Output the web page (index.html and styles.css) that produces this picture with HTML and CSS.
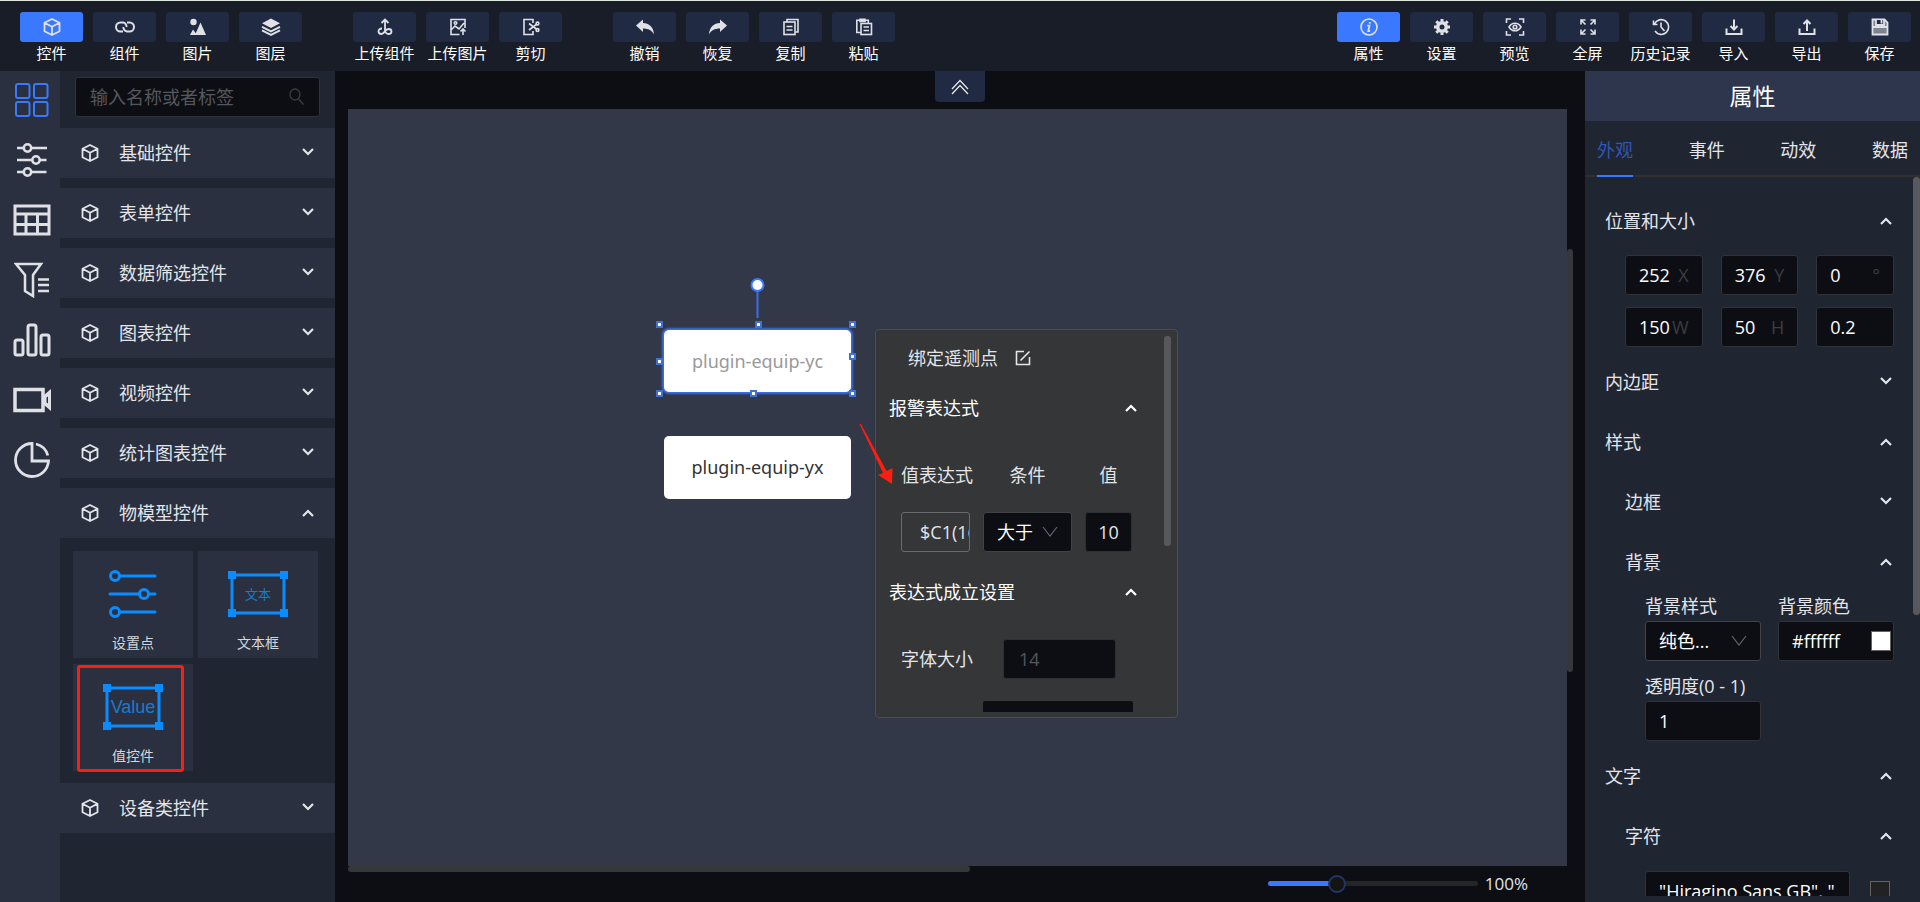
FILE: index.html
```html
<!DOCTYPE html>
<html lang="zh-CN">
<head>
  <meta charset="UTF-8" />
  <meta name="viewport" content="width=device-width, initial-scale=1.0"/>
  <title>组态编辑器</title>
  <link rel="stylesheet" href="styles.css">
</head>
<body>
  <!-- shared icons -->
  <svg class="sprite" aria-hidden="true">
    <symbol id="cube" viewBox="0 0 18 18"><path d="M9 1l7.500 3.800v8.400L9 17l-7.500-3.800V4.800zM1.500 4.800L9 8.800l7.500-4M9 8.800V17" fill="none" stroke="currentColor" stroke-width="1.800" stroke-linejoin="round"/></symbol>
    <symbol id="down" viewBox="0 0 12 12"><path d="M1 2l5 5 5-5" fill="none" stroke="currentColor" stroke-width="2.200"/></symbol>
    <symbol id="up" viewBox="0 0 12 12"><path d="M1 9l5-5 5 5" fill="none" stroke="currentColor" stroke-width="2.200"/></symbol>
    <symbol id="thin-down" viewBox="0 0 16 12"><path d="M1 1l7 9 7-9" fill="none" stroke="currentColor" stroke-width="1.200"/></symbol>
  </svg>

  <header class="topbar">
    <div class="tools">
      <button class="tool active"><span class="tool-icon"><svg width="18" height="18"><use href="#cube"/></svg></span>控件</button>
      <button class="tool"><span class="tool-icon"><svg width="20" height="14" viewBox="0 0 20 14" fill="none" stroke="currentColor" stroke-width="2"><path d="M8 11.500H5.500a4.500 4.500 0 0 1 0-9H8A4 4 0 0 1 11.500 7M12 2.500h2.500a4.500 4.500 0 0 1 0 9H12A4 4 0 0 1 8.500 7"/></svg></span>组件</button>
      <button class="tool"><span class="tool-icon"><svg width="18" height="18" viewBox="0 0 18 18" fill="currentColor"><circle cx="4.500" cy="4" r="3.200"/><path d="M6 17l5.500-12.500L17 17zM1 17l3-5.500 3 4L6 17z"/></svg></span>图片</button>
      <button class="tool"><span class="tool-icon"><svg width="20" height="18" viewBox="0 0 20 18"><path d="M10 0.500l9 4.700-9 4.700-9-4.700z" fill="currentColor"/><path d="M1 8.800l9 4.500 9-4.500M1 12.300l9 4.500 9-4.500" fill="none" stroke="currentColor" stroke-width="2"/></svg></span>图层</button>
    </div>
    <div class="tools">
      <button class="tool"><span class="tool-icon"><svg width="18" height="18" viewBox="0 0 18 18" fill="none" stroke="currentColor" stroke-width="1.800"><path d="M9 15V1.500M5.500 5L9 1.500 12.500 5M6 10.500c-2.500 0-3.500 1.300-3.500 2.800S3.800 16 5.500 16c3 0 3.500-5 7-5 1.800 0 3 1 3 2.500S14.300 16 12.500 16s-2.500-.8-3.500-2"/></svg></span>上传组件</button>
      <button class="tool"><span class="tool-icon"><svg width="18" height="18" viewBox="0 0 18 18" fill="none" stroke="currentColor" stroke-width="1.600"><path d="M10.500 16.500H2V1.500h14V10M2 12l4-4 4 3 5-6M14 17v-6M11.500 13.500L14 11l2.500 2.500"/><circle cx="6.500" cy="5" r="1.300"/></svg></span>上传图片</button>
      <button class="tool"><span class="tool-icon"><svg width="18" height="18" viewBox="0 0 18 18" fill="none" stroke="currentColor" stroke-width="1.600"><path d="M11 5V1.500H2v15h9V13M7 5.500l8 6M7 12l8-6"/><circle cx="15.500" cy="5.500" r="1.400"/><circle cx="15.500" cy="12" r="1.400"/></svg></span>剪切</button>
    </div>
    <div class="tools">
      <button class="tool"><span class="tool-icon"><svg width="20" height="18" viewBox="0 0 20 18" fill="currentColor"><path d="M1 7.500L8 1.500v3.500c6 0 10.500 4 11 11.500-2-4-5.500-6-11-6v3.500z"/></svg></span>撤销</button>
      <button class="tool"><span class="tool-icon"><svg width="20" height="18" viewBox="0 0 20 18" fill="currentColor"><path d="M19 7.500l-7-6v3.500C6 5 1.500 9 1 16.500c2-4 5.500-6 11-6v3.500z"/></svg></span>恢复</button>
      <button class="tool"><span class="tool-icon"><svg width="18" height="18" viewBox="0 0 18 18" fill="none" stroke="currentColor" stroke-width="1.600"><path d="M5 4V1.500h11V14h-2.500"/><rect x="2" y="4" width="11" height="12.500"/><path d="M4.500 8.500h6M4.500 12h6"/></svg></span>复制</button>
      <button class="tool"><span class="tool-icon"><svg width="18" height="18" viewBox="0 0 18 18" fill="none" stroke="currentColor" stroke-width="1.600"><path d="M6 14.500H1.800V2.200h11.500V5M5 1.200h5v2.300H5z"/><rect x="6" y="5.500" width="10.500" height="11"/><path d="M8.500 9h5.500M8.500 12.500h5.500"/></svg></span>粘贴</button>
    </div>
    <div class="tools tools-right">
      <button class="tool active"><span class="tool-icon"><svg width="18" height="18" viewBox="0 0 18 18" fill="none" stroke="currentColor"><circle cx="9" cy="9" r="8" stroke-width="1.600"/><path d="M7.200 7.600h2.300L8.200 13h1.900M9.800 4v1.800" stroke-width="1.800"/></svg></span>属性</button>
      <button class="tool"><span class="tool-icon"><svg width="18" height="18" viewBox="0 0 18 18" fill="none" stroke="currentColor"><circle cx="9" cy="9" r="4.300" stroke-width="3.600"/><path d="M9 1v2.500M9 14.500V17M1 9h2.500M14.500 9H17M3.300 3.300l2 2M12.700 12.700l2 2M14.700 3.300l-2 2M5.300 12.700l-2 2" stroke-width="3"/></svg></span>设置</button>
      <button class="tool"><span class="tool-icon"><svg width="20" height="18" viewBox="0 0 20 18" fill="none" stroke="currentColor" stroke-width="1.600"><path d="M1.500 5V1H6M14 1h4.500v4M18.500 13v4H14M6 17H1.500v-4M4 9c3-5 9-5 12 0-3 5-9 5-12 0z"/><circle cx="10" cy="9" r="1.800"/></svg></span>预览</button>
      <button class="tool"><span class="tool-icon"><svg width="18" height="18" viewBox="0 0 18 18" fill="none" stroke="currentColor" stroke-width="1.600"><path d="M2 6.500V2h4.500M2 2l4.500 4.500M11.500 2H16v4.500M16 2l-4.500 4.500M2 11.500V16h4.500M2 16l4.500-4.500M16 11.500V16h-4.500M16 16l-4.500-4.500"/></svg></span>全屏</button>
      <button class="tool"><span class="tool-icon"><svg width="18" height="18" viewBox="0 0 18 18" fill="none" stroke="currentColor" stroke-width="1.600"><path d="M2.500 6A7.400 7.400 0 1 1 3 13M1.500 2.500v4h4M9 4.500V9l3.500 4"/></svg></span>历史记录</button>
      <button class="tool"><span class="tool-icon"><svg width="18" height="18" viewBox="0 0 18 18" fill="none" stroke="currentColor" stroke-width="2"><path d="M1.500 10.500V16h15v-5.500M9 1.500v10M5.500 8L9 11.500 12.500 8"/></svg></span>导入</button>
      <button class="tool"><span class="tool-icon"><svg width="18" height="18" viewBox="0 0 18 18" fill="none" stroke="currentColor" stroke-width="2"><path d="M1.500 10.500V16h15v-5.500M9 13V2.500M5.500 6L9 2.500 12.500 6"/></svg></span>导出</button>
      <button class="tool"><span class="tool-icon"><svg width="18" height="18" viewBox="0 0 18 18" fill="none" stroke="currentColor" stroke-width="1.800"><path d="M1.500 1.500h12l3 3v12h-15z" fill="#7d8390"/><path d="M5 2v5h8V2" fill="#202a42"/><path d="M10.500 2v3.500M2 9h14"/></svg></span>保存</button>
    </div>
  </header>

  <main class="editor">
    <nav class="rail">
      <a href="#" class="active" aria-label="全部"><svg width="36" height="36" viewBox="0 0 36 36" fill="none" stroke="currentColor" stroke-width="2"><rect x="2" y="2" width="13.500" height="14" rx="2"/><rect x="20" y="2" width="13.500" height="14" rx="2"/><rect x="2" y="20" width="13.500" height="14" rx="2"/><rect x="20" y="20" width="13.500" height="14" rx="2"/></svg></a>
      <a href="#" aria-label="表单"><svg width="36" height="36" viewBox="0 0 36 36" fill="none" stroke="currentColor" stroke-width="2.500"><path d="M3 6h6.500M17 6h16M3 18h15.500M26 18h6.500M3 30h6.500M17 30h15.500"/><circle cx="13.500" cy="6" r="3.700"/><circle cx="22" cy="18" r="3.700"/><circle cx="13.500" cy="30" r="3.700"/></svg></a>
      <a href="#" aria-label="表格"><svg width="38" height="32" viewBox="0 0 38 32" fill="none" stroke="currentColor" stroke-width="3"><path d="M2 2h34v28H2zM2 10h34M2 20.500h34M13 10v20M24.500 10v20"/></svg></a>
      <a href="#" aria-label="筛选"><svg width="36" height="36" viewBox="0 0 36 36" fill="none" stroke="currentColor" stroke-width="2.500"><path d="M2 2h25l-8 11v21l-8-5V13zM24 17.500h11M24 23h11M24 29h11"/></svg></a>
      <a href="#" aria-label="图表"><svg width="38" height="34" viewBox="0 0 38 34" fill="none" stroke="currentColor" stroke-width="3"><rect x="2" y="17" width="8" height="15" rx="2"/><rect x="15" y="2" width="8" height="30" rx="2"/><rect x="28" y="12" width="8" height="20" rx="2"/></svg></a>
      <a href="#" aria-label="视频"><svg width="38" height="26" viewBox="0 0 38 26"><path d="M2 2.500h28v21H2z" fill="none" stroke="currentColor" stroke-width="3.500"/><path d="M31 8l7-6v22l-7-6zM33.500 10.500v5l1.500 1v-7z" fill="currentColor" fill-rule="evenodd"/></svg></a>
      <a href="#" aria-label="统计"><svg width="38" height="38" viewBox="0 0 38 38" fill="none" stroke="currentColor" stroke-width="2.800"><path d="M19 2.500A16.500 16.500 0 1 0 35.500 20H19zM23 3a16 16 0 0 1 11.800 11.500"/></svg></a>
    </nav>

    <aside class="widgets">
      <div class="search">
        <input type="text" placeholder="输入名称或者标签" aria-label="搜索控件">
        <svg width="16" height="18" viewBox="0 0 16 18" fill="none" stroke="currentColor" stroke-width="1.300"><ellipse cx="6" cy="6.500" rx="5" ry="5.500"/><path d="M9.500 11l5 5.500"/></svg>
      </div>
      <button class="group"><svg width="18" height="18"><use href="#cube"/></svg><span>基础控件</span><svg width="12" height="12"><use href="#down"/></svg></button>
      <button class="group"><svg width="18" height="18"><use href="#cube"/></svg><span>表单控件</span><svg width="12" height="12"><use href="#down"/></svg></button>
      <button class="group"><svg width="18" height="18"><use href="#cube"/></svg><span>数据筛选控件</span><svg width="12" height="12"><use href="#down"/></svg></button>
      <button class="group"><svg width="18" height="18"><use href="#cube"/></svg><span>图表控件</span><svg width="12" height="12"><use href="#down"/></svg></button>
      <button class="group"><svg width="18" height="18"><use href="#cube"/></svg><span>视频控件</span><svg width="12" height="12"><use href="#down"/></svg></button>
      <button class="group"><svg width="18" height="18"><use href="#cube"/></svg><span>统计图表控件</span><svg width="12" height="12"><use href="#down"/></svg></button>
      <button class="group"><svg width="18" height="18"><use href="#cube"/></svg><span>物模型控件</span><svg width="12" height="12"><use href="#up"/></svg></button>
      <div class="tiles">
        <button class="tile">
          <svg width="60" height="48" viewBox="0 0 60 48" fill="none" stroke="currentColor" stroke-width="3" stroke-linecap="round"><path d="M17 6h35M7 24h29M47 24h5M17 42h35"/><circle cx="12" cy="6" r="4.500"/><circle cx="41" cy="24" r="4.500"/><circle cx="12" cy="42" r="4.500"/></svg>
          <span>设置点</span>
        </button>
        <button class="tile">
          <svg width="60" height="48" viewBox="0 0 60 48" fill="currentColor"><path d="M4 5h52v38H4z" fill="none" stroke="currentColor" stroke-width="3"/><path d="M0 1h8v8H0zM52 1h8v8h-8zM0 39h8v8H0zM52 39h8v8h-8z"/><text x="30" y="29" class="tile-text">文本</text></svg>
          <span>文本框</span>
        </button>
        <button class="tile marked">
          <svg width="60" height="48" viewBox="0 0 60 48" fill="currentColor"><path d="M4 5h52v38H4z" fill="none" stroke="currentColor" stroke-width="3"/><path d="M0 1h8v8H0zM52 1h8v8h-8zM0 39h8v8H0zM52 39h8v8h-8z"/><text x="30" y="30" class="tile-value">Value</text></svg>
          <span>值控件</span>
        </button>
      </div>
      <button class="group"><svg width="18" height="18"><use href="#cube"/></svg><span>设备类控件</span><svg width="12" height="12"><use href="#down"/></svg></button>
    </aside>

    <section class="workspace">
      <button class="collapse" aria-label="收起工具栏"><svg width="18" height="16" viewBox="0 0 18 16" fill="none" stroke="currentColor" stroke-width="1.300"><path d="M1 10l8-8.500 8 8.500M1 15l8-8.500 8 8.500"/></svg></button>
      <div class="canvas">
        <div class="node node-yc">plugin-equip-yc</div>
        <svg class="selection" width="201" height="124" viewBox="0 0 201 124">
          <path d="M101.500 14v28" stroke="#3a70e6" stroke-width="2"/>
          <circle cx="101.500" cy="9" r="6" fill="#fff" stroke="#3a78ff" stroke-width="2"/>
          <g fill="#fff" stroke="#3f71d8" stroke-width="2">
            <rect x="1" y="46" width="5" height="5"/><rect x="100" y="46" width="5" height="5"/><rect x="194" y="46" width="5" height="5"/>
            <rect x="1" y="83" width="5" height="5"/><rect x="194" y="78" width="5" height="5"/>
            <rect x="1" y="115" width="5" height="5"/><rect x="95" y="115" width="5" height="5"/><rect x="194" y="115" width="5" height="5"/>
          </g>
        </svg>
        <div class="node node-yx">plugin-equip-yx</div>

        <div class="popup">
          <div class="popup-body">
            <button class="bind">绑定遥测点<svg width="16" height="16" viewBox="0 0 16 16" fill="none" stroke="currentColor" stroke-width="1.600"><path d="M9 1.500H1.500v13h13V7M5.500 10.500l9-9"/></svg></button>
            <button class="fold">报警表达式<svg width="12" height="12"><use href="#up"/></svg></button>
            <div class="expr">
              <label for="expr">值表达式</label>
              <label for="cond">条件</label>
              <label for="limit">值</label>
              <input id="expr" class="ghost" type="text" value="$C1(16">
              <div class="select-wrap">
                <select id="cond"><option>大于</option></select>
                <svg width="16" height="12"><use href="#thin-down"/></svg>
              </div>
              <input id="limit" type="text" value="10">
            </div>
            <button class="fold">表达式成立设置<svg width="12" height="12"><use href="#up"/></svg></button>
            <div class="font-row">
              <label for="size">字体大小</label>
              <input id="size" type="text" placeholder="14">
            </div>
            <div class="more"></div>
          </div>
          <div class="popup-thumb"></div>
        </div>

        <svg class="arrow" width="36" height="62" viewBox="0 0 36 62"><path d="M0.500 1l1.500 0 25.500 47 6-3-0.500 16-14-9 5-2z" fill="#ff1d10"/></svg>
      </div>
      <div class="scroll-y"></div>
      <div class="scroll-x"></div>
      <footer class="zoom">
        <input type="range" min="0" max="320" value="100" aria-label="缩放">
        <span>100%</span>
      </footer>
    </section>

    <aside class="props">
      <h2>属性</h2>
      <div class="tabs">
        <button class="active">外观</button>
        <button>事件</button>
        <button>动效</button>
        <button>数据</button>
      </div>
      <div class="props-body">
        <button class="section">位置和大小<svg width="12" height="12"><use href="#up"/></svg></button>
        <div class="position">
          <label class="field"><input type="text" value="252"><span>X</span></label>
          <label class="field"><input type="text" value="376"><span>Y</span></label>
          <label class="field"><input type="text" value="0"><span>°</span></label>
          <label class="field"><input type="text" value="150"><span>W</span></label>
          <label class="field"><input type="text" value="50"><span>H</span></label>
          <label class="field"><input type="text" value="0.2" aria-label="比例"></label>
        </div>
        <button class="section">内边距<svg width="12" height="12"><use href="#down"/></svg></button>
        <button class="section">样式<svg width="12" height="12"><use href="#up"/></svg></button>
        <button class="section sub">边框<svg width="12" height="12"><use href="#down"/></svg></button>
        <button class="section sub">背景<svg width="12" height="12"><use href="#up"/></svg></button>
        <div class="background">
          <div>
            <label for="bgType">背景样式</label>
            <div class="select-wrap">
              <select id="bgType"><option>纯色...</option></select>
              <svg width="16" height="12"><use href="#thin-down"/></svg>
            </div>
          </div>
          <div>
            <label for="bgColor">背景颜色</label>
            <div class="field">
              <input id="bgColor" type="text" value="#ffffff">
              <button class="swatch" aria-label="选择颜色"></button>
            </div>
          </div>
          <div>
            <label for="opacity">透明度(0 - 1)</label>
            <div class="field"><input id="opacity" type="text" value="1"></div>
          </div>
        </div>
        <button class="section">文字<svg width="12" height="12"><use href="#up"/></svg></button>
        <button class="section sub">字符<svg width="12" height="12"><use href="#up"/></svg></button>
        <div class="chars">
          <div class="field"><input type="text" aria-label="字体" value='"Hiragino Sans GB", "Microsoft YaHei"'></div>
          <button class="swatch dark" aria-label="文字颜色"></button>
        </div>
      </div>
      <div class="props-thumb"></div>
    </aside>
  </main>
</body>
</html>
```

FILE: styles.css
```css
*,
*::after {
  box-sizing: border-box;
}

body {
  margin: 0;
  height: 100vh;
  display: flex;
  flex-direction: column;
  overflow: hidden;
  background-color: #0d0e13;
  color: #e3e5ea;
  font-family: "Open Sans", "Noto Sans CJK SC", sans-serif;
  font-size: 18px;
  line-height: 24px;
}

button,
input,
select {
  font: inherit;
  color: inherit;
  margin: 0;
}

button {
  padding: 0;
  border: none;
  background: none;
  cursor: pointer;
}

svg {
  flex: none;
}

.sprite {
  position: absolute;
  width: 0;
  height: 0;
}

/* top toolbar */
.topbar {
  flex: none;
  display: flex;
  gap: 51px;
  height: 71px;
  padding: 11px 9px 0 20px;
  border-top: 1px solid #dfe5df;
  background-color: #191d28;
}

.tools {
  display: flex;
  align-items: flex-start;
  gap: 10px;
}

.tools-right {
  margin-left: auto;
}

.tool {
  width: 63px;
  color: #fff;
  font-size: 15px;
  line-height: 22px;
  white-space: nowrap;
}

.tool-icon {
  display: flex;
  align-items: center;
  justify-content: center;
  height: 30px;
  border-radius: 3px;
  background-color: #202a42;
  color: #dfe1e6;
}

.tool.active .tool-icon {
  background-color: #3a78ff;
}

.editor {
  flex: 1;
  min-height: 0;
  display: flex;
}

/* icon rail */
.rail {
  flex: none;
  width: 60px;
  background-color: #2a303f;
}

.rail a {
  display: flex;
  align-items: center;
  justify-content: center;
  height: 60px;
  padding: 0 0 2px 4px;
  color: #dfe1e6;
}

.rail a.active {
  color: #3a78ff;
}

/* widget list */
.widgets {
  flex: none;
  width: 275px;
  display: flex;
  flex-direction: column;
  gap: 10px;
  padding-top: 6px;
  background-color: #202532;
}

.search {
  display: flex;
  align-items: center;
  height: 40px;
  margin: 0 15px 1px;
  padding: 0 14px;
  border: 1px solid #303238;
  border-radius: 3px;
  background-color: #0d0e13;
  color: #3b3d42;
}

.search input {
  flex: 1;
  min-width: 0;
  padding: 0;
  border: none;
  outline: none;
  background: none;
  color: #e3e5ea;
}

.search input::placeholder {
  color: #55575c;
}

.group {
  flex: none;
  display: flex;
  align-items: center;
  height: 50px;
  padding: 0 21px 1px;
  background-color: #2a303f;
}

.group span {
  flex: 1;
  padding-left: 20px;
  text-align: left;
}

.tiles {
  display: grid;
  grid-template-columns: 120px 120px;
  gap: 6px 5px;
  padding: 3px 13px 2px;
}

.tile {
  position: relative;
  display: flex;
  flex-direction: column;
  align-items: center;
  gap: 13px;
  height: 107px;
  padding-top: 19px;
  background-color: #2a303f;
  color: #0a8cff;
}

.tile span {
  color: #d5d7dc;
  font-size: 14px;
}

.tile-text {
  font-size: 13px;
  text-anchor: middle;
}

.tile-value {
  font-family: "Liberation Sans", sans-serif;
  font-size: 18px;
  text-anchor: middle;
}

.tile-text,
.tile-value {
  fill: #1d7acb;
}

.marked::after {
  content: "";
  position: absolute;
  top: 1px;
  left: 4px;
  width: 107px;
  height: 107px;
  border: 3px solid #ff1d10;
  border-radius: 3px;
}

/* canvas area */
.workspace {
  position: relative;
  flex: 1;
  min-width: 0;
  display: grid;
  grid-template-columns: 1fr 6px;
  grid-template-rows: 1fr 6px 30px;
  padding: 38px 12px 0 13px;
}

.collapse {
  position: absolute;
  top: 0;
  left: 50%;
  width: 50px;
  height: 31px;
  margin-left: -25px;
  border-radius: 0 0 4px 4px;
  background-color: #202a42;
}

.collapse svg {
  display: block;
  margin: auto;
}

.canvas {
  position: relative;
  overflow: hidden;
  background-color: #323848;
}

.scroll-y {
  height: 56%;
  align-self: center;
  margin-bottom: 54px;
  border-radius: 3px;
  background-color: #36373b;
}

.scroll-x {
  width: 51%;
  border-radius: 3px;
  background-color: #36373b;
}

.node {
  position: absolute;
  left: 316px;
  width: 187px;
  height: 63px;
  border-radius: 5px;
  background-color: #fff;
  font-family: "Noto Sans", sans-serif;
  line-height: 63px;
  text-align: center;
}

.node-yc {
  top: 221px;
  height: 62px;
  box-shadow: 0 0 2px 2px #3a70e6;
  color: #999;
}

.node-yx {
  top: 327px;
  color: #333;
}

.selection {
  position: absolute;
  top: 167px;
  left: 308px;
}

.arrow {
  position: absolute;
  top: 314px;
  left: 511px;
}

.popup {
  position: absolute;
  top: 220px;
  left: 527px;
  width: 303px;
  height: 389px;
  padding: 4px 39px 6px 13px;
  border: 1px solid #4c4d50;
  border-radius: 4px;
  background-color: #353637;
}

.popup-body {
  height: 378px;
  overflow: hidden;
}

.popup-thumb {
  position: absolute;
  top: 6px;
  right: 6px;
  width: 7px;
  height: 210px;
  border-radius: 3px;
  background-color: #57585c;
}

.bind {
  display: flex;
  align-items: center;
  gap: 17px;
  height: 49px;
  padding: 0 0 2px 19px;
}

.fold {
  display: flex;
  align-items: center;
  justify-content: space-between;
  width: 100%;
  height: 50px;
  padding: 0 1px 1px 0;
  color: #fff;
}

.expr {
  display: grid;
  grid-template-columns: 69px 89px 47px;
  gap: 25px 13px;
  padding: 30px 0 15px 12px;
}

.expr label {
  text-align: center;
  white-space: nowrap;
}

.expr input,
.font-row input {
  width: 100%;
  height: 40px;
  border: 1px solid #2e2f33;
  border-radius: 3px;
  background-color: #0d0e13;
}

.expr input {
  padding: 0;
  text-align: center;
}

.expr .ghost {
  padding-left: 18px;
  border-color: #6a6b6e;
  background: none;
  text-align: left;
}

.font-row {
  display: flex;
  align-items: center;
  gap: 30px;
  height: 84px;
  padding: 0 22px 0 12px;
}

.font-row label {
  flex: none;
}

.font-row input {
  min-width: 0;
  padding: 0 15px;
}

.font-row input::placeholder {
  color: #55575c;
}

.more {
  height: 40px;
  margin: 0 5px 0 94px;
  border-radius: 2px;
  background-color: #0d0e13;
}

.select-wrap {
  position: relative;
  color: #64666b;
}

.select-wrap select {
  display: block;
  width: 100%;
  height: 40px;
  padding: 0 0 0 13px;
  border: 1px solid #424347;
  border-radius: 3px;
  background-color: #0d0e13;
  color: #fff;
  appearance: none;
}

.select-wrap svg {
  position: absolute;
  top: 14px;
  right: 14px;
  pointer-events: none;
}

.zoom {
  grid-column: 1 / -1;
  display: flex;
  align-items: center;
  justify-content: flex-end;
  gap: 7px;
  height: 23px;
  padding-right: 45px;
  font-size: 17px;
}

.zoom input {
  width: 210px;
  height: 5px;
  border-radius: 3px;
  background: linear-gradient(to right, #3a78ff 33%, #262626 33%);
  appearance: none;
}

.zoom input::-webkit-slider-thumb {
  width: 18px;
  height: 18px;
  border: 2px solid #203566;
  border-radius: 50%;
  background-color: #141414;
  appearance: none;
}

/* property panel */
.props {
  position: relative;
  flex: none;
  width: 335px;
  display: flex;
  flex-direction: column;
  padding-bottom: 6px;
  background-color: #202532;
}

.props h2 {
  flex: none;
  margin: 0;
  background-color: #2d364c;
  color: #fff;
  font-size: 23px;
  font-weight: normal;
  line-height: 50px;
  text-align: center;
}

.tabs {
  flex: none;
  display: flex;
  justify-content: space-between;
  height: 56px;
  padding: 0 12px;
  border-bottom: 2px solid #303030;
}

.tabs button {
  height: 56px;
  padding-top: 3px;
  border-bottom: 2px solid transparent;
}

.tabs .active {
  border-color: #3a78ff;
  color: #2f55b5;
}

.props-body {
  flex: 1;
  min-height: 0;
  overflow: hidden;
  padding: 14px 26px 0 20px;
}

.props-thumb {
  position: absolute;
  top: 106px;
  right: 0;
  width: 7px;
  height: 438px;
  border-radius: 4px;
  background-color: #58595e;
}

.section {
  display: flex;
  align-items: center;
  justify-content: space-between;
  width: 100%;
  height: 60px;
  padding: 0 2px 1px 0;
}

.sub {
  padding-left: 20px;
}

.position {
  display: grid;
  grid-template-columns: repeat(3, 1fr);
  gap: 12px 18px;
  padding: 4px 0 5px 20px;
}

.field {
  display: flex;
  align-items: center;
  height: 40px;
  padding: 0 13px;
  border: 1px solid #303238;
  border-radius: 3px;
  background-color: #0d0e13;
  color: #3b3d42;
}

.field input {
  flex: 1;
  width: 0;
  min-width: 0;
  padding: 0;
  border: none;
  outline: none;
  background: none;
  color: #fff;
}

.background {
  display: grid;
  grid-template-columns: 1fr 1fr;
  gap: 11px 17px;
  padding: 0 0 5px 40px;
}

.background label {
  display: block;
  line-height: 29px;
  white-space: nowrap;
}

.background .field {
  padding-right: 2px;
}

.swatch {
  flex: none;
  width: 20px;
  height: 20px;
  border: 1px solid #6a625f;
  background-color: #fff;
}

.swatch.dark {
  background-color: #222;
}

.chars {
  display: flex;
  align-items: center;
  gap: 20px;
  padding: 5px 4px 0 40px;
}

.chars .field {
  flex: 1;
}
```
